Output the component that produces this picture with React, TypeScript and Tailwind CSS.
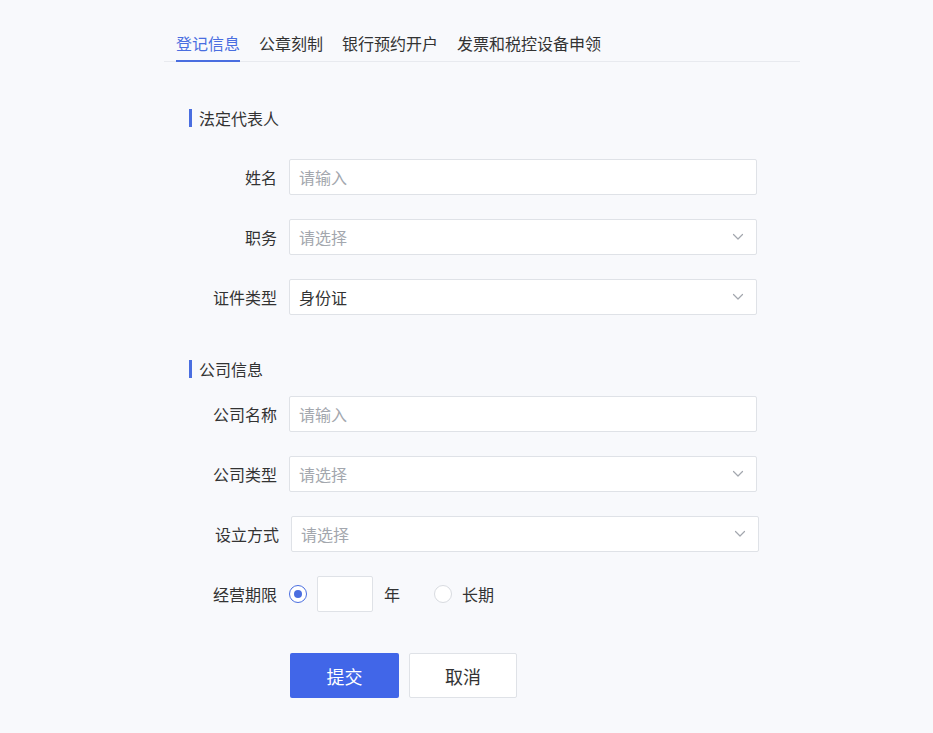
import { useState } from 'react';

const tabs = ['登记信息', '公章刻制', '银行预约开户', '发票和税控设备申领'];

function Chevron() {
  return (
    <svg width="12" height="8" viewBox="0 0 12 8" fill="none" className="shrink-0">
      <path d="M1.5 1.5L6 6L10.5 1.5" stroke="#a3a7ae" strokeWidth="1.2" strokeLinecap="round" strokeLinejoin="round" />
    </svg>
  );
}

function SectionTitle({ text }: { text: string }) {
  return (
    <div className="flex items-center h-5 pl-[25px]">
      <span className="w-[3px] h-[18px] bg-[#4a6ee0]" />
      <span className="ml-[7px] text-base leading-5 text-[#333]">{text}</span>
    </div>
  );
}

function Row({ label, children, shift }: { label: string; children: React.ReactNode; shift?: boolean }) {
  return (
    <div className={`flex items-center ${shift ? 'pl-[2px]' : ''}`}>
      <label className="w-[113px] shrink-0 text-right text-base text-[#333]">{label}</label>
      <div className="ml-3 w-[468px]">{children}</div>
    </div>
  );
}

function TextInput({ placeholder }: { placeholder: string }) {
  return (
    <input
      placeholder={placeholder}
      className="w-full h-9 px-[9px] bg-white border border-[#dfe2e7] rounded-[2px] text-base text-[#333] placeholder:text-[#a3a7ae] outline-none"
    />
  );
}

function Select({ value, placeholder }: { value?: string; placeholder: string }) {
  return (
    <div className="w-full h-9 pl-[9px] pr-3 bg-white border border-[#dfe2e7] rounded-[2px] flex items-center justify-between">
      <span className={`text-base ${value ? 'text-[#333]' : 'text-[#a3a7ae]'}`}>{value ?? placeholder}</span>
      <Chevron />
    </div>
  );
}

function Radio({ checked, onClick }: { checked: boolean; onClick: () => void }) {
  return (
    <button
      onClick={onClick}
      className={`w-[18px] h-[18px] rounded-full border bg-white flex items-center justify-center ${checked ? 'border-[#4a6ee0]' : 'border-[#d8dbe0]'}`}
    >
      {checked && <span className="w-2 h-2 rounded-full bg-[#4a6ee0]" />}
    </button>
  );
}

export default function App() {
  const [active, setActive] = useState(0);
  const [term, setTerm] = useState<'year' | 'long'>('year');

  return (
    <div
      className="min-h-[733px] w-full bg-[#f8f9fc] pt-[31px]"
      style={{ fontFamily: '"Noto Sans CJK SC", "Noto Sans", sans-serif' }}
    >
      <div className="ml-[164px] w-[636px]">
        {/* Tabs */}
        <div className="flex gap-[19px] pl-3 border-b border-[#e8eaef]">
          {tabs.map((t, i) => (
            <button
              key={t}
              onClick={() => setActive(i)}
              className={`pb-[5px] -mb-px border-b-2 text-base leading-6 ${
                active === i ? 'border-[#4a6ee0] text-[#4a6ee0]' : 'border-transparent text-[#333]'
              }`}
            >
              {t}
            </button>
          ))}
        </div>

        {/* 法定代表人 */}
        <div className="mt-[46px]">
          <SectionTitle text="法定代表人" />
        </div>
        <div className="mt-[31px] flex flex-col gap-6">
          <Row label="姓名">
            <TextInput placeholder="请输入" />
          </Row>
          <Row label="职务">
            <Select placeholder="请选择" />
          </Row>
          <Row label="证件类型">
            <Select value="身份证" placeholder="请选择" />
          </Row>
        </div>

        {/* 公司信息 */}
        <div className="mt-[44px]">
          <SectionTitle text="公司信息" />
        </div>
        <div className="mt-[17px] flex flex-col gap-6">
          <Row label="公司名称">
            <TextInput placeholder="请输入" />
          </Row>
          <Row label="公司类型">
            <Select placeholder="请选择" />
          </Row>
          <Row label="设立方式" shift>
            <Select placeholder="请选择" />
          </Row>
          <Row label="经营期限">
            <div className="flex items-center">
              <Radio checked={term === 'year'} onClick={() => setTerm('year')} />
              <input className="ml-[10px] w-[56px] h-9 bg-white border border-[#dfe2e7] rounded-[2px] outline-none px-2 text-base" />
              <span className="ml-[11px] text-base text-[#333]">年</span>
              <span className="ml-[34px]">
                <Radio checked={term === 'long'} onClick={() => setTerm('long')} />
              </span>
              <span className="ml-[10px] text-base text-[#333]">长期</span>
            </div>
          </Row>
        </div>

        {/* Actions */}
        <div className="mt-[41px] ml-[126px] flex gap-[10px]">
          <button className="w-[109px] h-[45px] rounded-[2px] bg-[#4166e8] text-white text-lg">提交</button>
          <button className="w-[108px] h-[45px] rounded-[2px] bg-white border border-[#dfe2e7] text-[#333] text-lg">
            取消
          </button>
        </div>
      </div>
    </div>
  );
}
